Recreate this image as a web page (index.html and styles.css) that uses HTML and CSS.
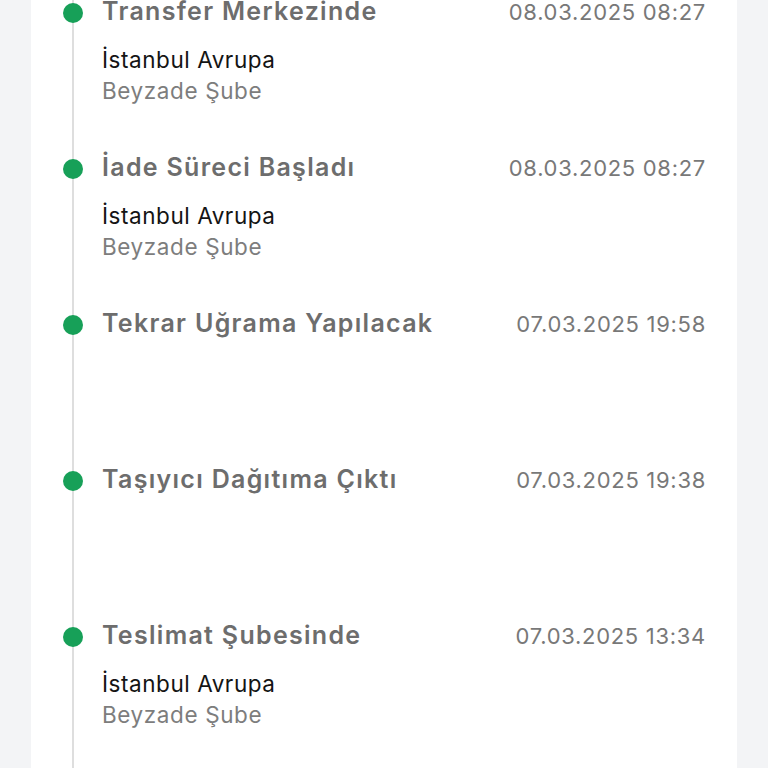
FILE: index.html
```html
<!DOCTYPE html>
<html lang="tr">
<head>
<meta charset="utf-8">
<title>Gönderi Hareketleri</title>
<link rel="stylesheet" href="styles.css">
</head>
<body>
<div class="card">
  <ul class="timeline">
    <li class="step">
      <span class="dot"></span>
      <div class="info">
        <div class="head">
          <span class="title">Transfer Merkezinde</span>
          <span class="date">08.03.2025 08:27</span>
        </div>
        <div class="place">İstanbul Avrupa</div>
        <div class="branch">Beyzade Şube</div>
      </div>
    </li>
    <li class="step">
      <span class="dot"></span>
      <div class="info">
        <div class="head">
          <span class="title">İade Süreci Başladı</span>
          <span class="date">08.03.2025 08:27</span>
        </div>
        <div class="place">İstanbul Avrupa</div>
        <div class="branch">Beyzade Şube</div>
      </div>
    </li>
    <li class="step">
      <span class="dot"></span>
      <div class="info">
        <div class="head">
          <span class="title">Tekrar Uğrama Yapılacak</span>
          <span class="date">07.03.2025 19:58</span>
        </div>
      </div>
    </li>
    <li class="step">
      <span class="dot"></span>
      <div class="info">
        <div class="head">
          <span class="title">Taşıyıcı Dağıtıma Çıktı</span>
          <span class="date">07.03.2025 19:38</span>
        </div>
      </div>
    </li>
    <li class="step">
      <span class="dot"></span>
      <div class="info">
        <div class="head">
          <span class="title">Teslimat Şubesinde</span>
          <span class="date">07.03.2025 13:34</span>
        </div>
        <div class="place">İstanbul Avrupa</div>
        <div class="branch">Beyzade Şube</div>
      </div>
    </li>
  </ul>
</div>
</body>
</html>
```

FILE: styles.css
```css
html, body {
  margin: 0;
  height: 100%;
  overflow: hidden;
}

body {
  background: #f3f4f6;
  font-family: Inter, "Noto Sans", sans-serif;
}

.card {
  margin: 0 31px;
  min-height: 100%;
  background: #fff;
  padding-right: 31px;
  box-sizing: border-box;
}

.timeline {
  list-style: none;
  margin: -5px 0 0 0;
  padding: 0 0 40px 0;
  /* the vertical rail behind the dots */
  background: linear-gradient(#dedede, #dedede) no-repeat 41px 0 / 2px 100%;
}

.step {
  display: flex;
  height: 156px;
}

.dot {
  flex: none;
  width: 20px;
  height: 20px;
  border-radius: 50%;
  background: #17a058;
  margin: 8px 19px 0 32px;
}

.info {
  flex: 1;
}

.head {
  display: flex;
  justify-content: space-between;
  align-items: baseline;
  height: 32px;
}

.title {
  font-size: 25px;
  line-height: 32px;
  font-weight: 600;
  letter-spacing: 1.3px;
  color: #6d6d6d;
}

.date {
  font-size: 22px;
  line-height: 32px;
  letter-spacing: 0.7px;
  color: #787878;
}

.place {
  margin-top: 17px;
  font-size: 22.5px;
  line-height: 31px;
  letter-spacing: 0.55px;
  color: #141414;
}

.branch {
  font-size: 22.5px;
  line-height: 31px;
  letter-spacing: 0.6px;
  color: #7d7d7d;
}
```
